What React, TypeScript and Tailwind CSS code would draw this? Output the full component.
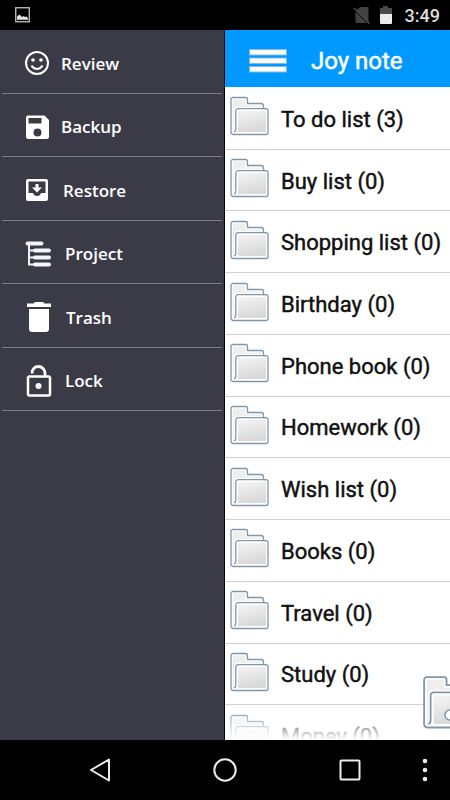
import type { ReactNode } from 'react';

type MenuItem = { label: string; icon: ReactNode };
type Folder = { name: string; count: number };

const MENU: MenuItem[] = [
  {
    label: 'Review',
    icon: (
      <svg viewBox="0 0 24 26" className="w-6 h-[26px]" fill="none" stroke="white">
        <circle cx="12" cy="13" r="11" strokeWidth="2" />
        <circle cx="8" cy="10" r="1.8" fill="white" stroke="none" />
        <circle cx="16" cy="10" r="1.8" fill="white" stroke="none" />
        <path d="M6.500 15.400C8 18 10 19 12 19s4-1 5.500-3.600" strokeWidth="2" />
      </svg>
    ),
  },
  {
    label: 'Backup',
    icon: (
      <svg viewBox="0 0 24 26" className="w-6 h-[26px]" fill="white">
        <path
          fillRule="evenodd"
          d="M3 1.500h16.500L24 6v16.500a2.500 2.500 0 0 1-2.500 2.500H3.500A2.500 2.500 0 0 1 1 22.500V3.500a2 2 0 0 1 2-2zM3.500 4v5.500h13V4zM12.500 14.500a4 4 0 1 0 0 8 4 4 0 0 0 0-8z"
        />
      </svg>
    ),
  },
  {
    label: 'Restore',
    icon: (
      <svg viewBox="0 0 26 26" className="w-[26px] h-[26px]" fill="white">
        <path
          fillRule="evenodd"
          d="M3 2h18a2 2 0 0 1 2 2v18a2 2 0 0 1-2 2H3a2 2 0 0 1-2-2V4a2 2 0 0 1 2-2zM3.500 4.500v11.500h4.500a4.200 4.200 0 0 0 8 0h4.500V4.500z"
        />
        <path d="M10.500 7h3v3.500H17l-5 5-5-5h3.500z" />
      </svg>
    ),
  },
  {
    label: 'Project',
    icon: (
      <svg viewBox="0 0 28 28" className="w-7 h-7" fill="none" stroke="#f2f5fa" strokeLinecap="round">
        <path d="M2.500 3.500h14M10 10.500h14M10 17.500h14M10 24.500h14" strokeWidth="4" />
        <path d="M4 4v20.500h6M4 10.500h6M4 17.500h6" strokeWidth="2" />
      </svg>
    ),
  },
  {
    label: 'Trash',
    icon: (
      <svg viewBox="0 0 29 32" className="w-[29px] h-8" fill="white">
        <path d="M8.500 2.500 10 1h8l1.500 1.500H26V6H2V2.500z" />
        <path d="M4 8h20v20a3 3 0 0 1-3 3H7a3 3 0 0 1-3-3z" />
      </svg>
    ),
  },
  {
    label: 'Lock',
    icon: (
      <svg viewBox="0 0 28 34" className="w-7 h-[34px]" fill="none" stroke="white">
        <rect x="3" y="12.500" width="22" height="19" rx="1.500" strokeWidth="2.500" />
        <path d="M7 9.500C7 5 10 2.500 13.500 2.500S20 5.500 20 9v3" strokeWidth="2.800" />
        <circle cx="13.500" cy="22" r="3" fill="white" stroke="none" />
      </svg>
    ),
  },
];

const FOLDERS: Folder[] = [
  { name: 'To do list', count: 3 },
  { name: 'Buy list', count: 0 },
  { name: 'Shopping list', count: 0 },
  { name: 'Birthday', count: 0 },
  { name: 'Phone book', count: 0 },
  { name: 'Homework', count: 0 },
  { name: 'Wish list', count: 0 },
  { name: 'Books', count: 0 },
  { name: 'Travel', count: 0 },
  { name: 'Study', count: 0 },
  { name: 'Money', count: 0 },
];

function FolderIcon({ className }: { className: string }) {
  return (
    <svg viewBox="0 0 40 44" className={className} stroke="#8196a8" strokeWidth="1.3">
      <defs>
        <linearGradient id="folderFront" x1="0" y1="0" x2="0.300" y2="1">
          <stop offset="0" stopColor="#f4f4f4" />
          <stop offset="1" stopColor="#d9d9d9" />
        </linearGradient>
      </defs>
      <path
        d="M3 1.500h12.500a2 2 0 0 1 2 2v4h13.500a2.500 2.500 0 0 1 2.500 2.500v2.700h2.500a2 2 0 0 1 2 2v21.800a2 2 0 0 1-2 2H3.500a2.500 2.500 0 0 1-2.500-2.500V3.500a2 2 0 0 1 2-2z"
        fill="white"
      />
      <path d="M3 3.500h12.500v6H31v1.500H7a3 3 0 0 0-3 3V34H3z" fill="#eeeeee" stroke="none" />
      <rect x="8" y="15" width="28" height="21" rx="1" fill="url(#folderFront)" stroke="none" />
      <path d="M36 12.700H8a2.200 2.200 0 0 0-2.200 2.200V33.500q0 1.800-1.800 2.300" fill="none" />
    </svg>
  );
}

function StatusBar() {
  return (
    <div className="h-[30px] shrink-0 bg-black flex items-center pl-[15px] pr-[10px]">
      <svg viewBox="0 0 16 16" className="w-4 h-4" aria-hidden="true">
        <rect x="0.750" y="0.750" width="13.500" height="14" fill="none" stroke="#c4c4c4" strokeWidth="1.300" />
        <path d="M2 12.800V9.500L4.500 7.500 7 10l1.500-1 1.500 1 1.500-.5 1.500 2v1.300z" fill="#e4e4e4" />
      </svg>
      <svg viewBox="0 0 18 18" className="w-[18px] h-[18px] ml-auto" aria-hidden="true">
        <path d="M7 1h7.500a1 1 0 0 1 1 1v14a1 1 0 0 1-1 1h-11a1 1 0 0 1-1-1V5z" fill="#424242" />
        <path d="M1 3 16 18" stroke="black" strokeWidth="1.500" />
        <path d="M1 2 16.500 17.500" stroke="#4c4c4c" strokeWidth="1.500" />
      </svg>
      <svg viewBox="0 0 14 18" className="w-[14px] h-[18px] ml-2" aria-hidden="true">
        <path d="M1 2h3V0h5v2h4v6H1z" fill="#4a4a4a" />
        <path d="M1 8h12v9a1 1 0 0 1-1 1H2a1 1 0 0 1-1-1z" fill="#ececec" />
      </svg>
      <span className="ml-3 text-lg leading-[30px] pt-px font-medium text-[#dcdcdc]">3:49</span>
    </div>
  );
}

function SideMenu() {
  return (
    <nav className="w-1/2 shrink-0 bg-[#3b3b47] border-r border-black">
      <ul className="grid auto-rows-fr h-[381px] px-[2px]">
        {MENU.map((item) => (
          <li key={item.label} className="border-b border-[#7c7d84]">
            <button className="w-full h-full flex items-center gap-3 pl-[23px] pt-1 text-white text-[17px] font-semibold font-['Open_Sans','Noto_Sans',sans-serif]">
              {item.icon}
              {item.label}
            </button>
          </li>
        ))}
      </ul>
    </nav>
  );
}

function FolderList() {
  return (
    <div className="relative flex-1 min-h-0 overflow-hidden">
      <ul className="grid auto-rows-fr h-[680px] pt-px">
        {FOLDERS.map((folder) => (
          <li key={folder.name} className="border-b border-[#cfcfcf]">
            <button className="w-full h-full flex items-center gap-[11px] pl-[5px] text-[22px] text-[#111] whitespace-nowrap [-webkit-text-stroke:thin]">
              <FolderIcon className="w-10 h-11 shrink-0" />
              <span className="pt-[2px]">
                {folder.name} ({folder.count})
              </span>
            </button>
          </li>
        ))}
      </ul>
      <div className="absolute inset-x-0 bottom-0 h-8 bg-linear-to-b from-white/0 to-white pointer-events-none" />
      <button aria-label="Add folder" className="absolute right-[-28px] bottom-[5px] w-[56px] h-[60px]">
        <FolderIcon className="w-full h-full" />
        <svg viewBox="0 0 12 12" className="absolute left-[22px] top-[34px] w-3 h-3" fill="white" stroke="#8196a8">
          <circle cx="6" cy="6" r="5" strokeWidth="1.500" />
        </svg>
      </button>
    </div>
  );
}

function NavBar() {
  return (
    <div className="h-[60px] shrink-0 bg-black grid grid-cols-18">
      <button aria-label="Back" className="col-start-4 col-span-2 flex items-center justify-center">
        <svg viewBox="0 0 24 24" className="w-6 h-6" fill="none" stroke="#ececec" strokeWidth="2" strokeLinejoin="round">
          <path d="M21 1.500v21L3 12z" />
        </svg>
      </button>
      <button aria-label="Home" className="col-start-9 col-span-2 flex items-center justify-center">
        <svg viewBox="0 0 24 24" className="w-6 h-6" fill="none" stroke="#ececec" strokeWidth="2">
          <circle cx="12" cy="12" r="10.700" />
        </svg>
      </button>
      <button aria-label="Recent apps" className="col-start-14 col-span-2 flex items-center justify-center">
        <svg viewBox="0 0 24 24" className="w-6 h-6" fill="none" stroke="#ececec" strokeWidth="2">
          <rect x="2.500" y="2.500" width="19" height="19" rx="1" />
        </svg>
      </button>
      <button aria-label="More" className="col-start-17 col-span-2 flex items-center justify-center">
        <svg viewBox="0 0 24 24" className="w-6 h-6" fill="#ececec">
          <circle cx="12" cy="3" r="2.300" />
          <circle cx="12" cy="12" r="2.300" />
          <circle cx="12" cy="21" r="2.300" />
        </svg>
      </button>
    </div>
  );
}

export default function App() {
  return (
    <div className="h-screen flex flex-col overflow-hidden bg-white font-[Roboto,sans-serif]">
      <StatusBar />
      <div className="flex flex-1 min-h-0">
        <SideMenu />
        <main className="flex-1 min-w-0 flex flex-col overflow-hidden">
          <header className="h-[57px] shrink-0 bg-[#0099ff] flex items-center gap-6 pl-6 pt-[5px]">
            <button aria-label="Menu">
              <svg viewBox="0 0 38 24" className="w-[38px] h-6" fill="white" stroke="#7fb8e6">
                <rect x="0.500" y="0.500" width="37" height="5.500" />
                <rect x="0.500" y="9" width="37" height="5.500" />
                <rect x="0.500" y="17.500" width="37" height="5.500" />
              </svg>
            </button>
            <h1 className="text-2xl text-white [-webkit-text-stroke:thin]">Joy note</h1>
          </header>
          <FolderList />
        </main>
      </div>
      <NavBar />
    </div>
  );
}
